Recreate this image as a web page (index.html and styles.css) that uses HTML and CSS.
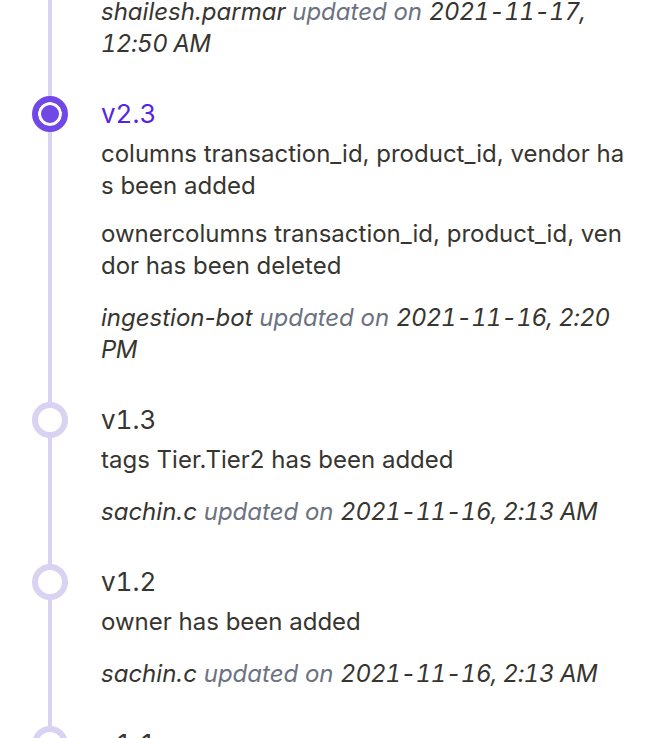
FILE: index.html
```html
<!DOCTYPE html>
<html lang="en">
<head>
    <meta charset="UTF-8">
    <meta name="viewport" content="width=device-width, initial-scale=1.0">
    <title>Version history</title>
    <link rel="stylesheet" href="styles.css">
</head>
<body>

<div class="timeline">
    <div class="item item-partial">
        <p class="meta"><span class="author">shailesh.parmar</span> <span class="muted">updated on</span> <span class="date">2021-11-17, 12:50 AM</span></p>
    </div>

    <div class="item active">
        <span class="dot"></span>
        <h3 class="version">v2.3</h3>
        <p class="change">columns transaction_id, product_id, vendor has been added</p>
        <p class="change">ownercolumns transaction_id, product_id, vendor has been deleted</p>
        <p class="meta"><span class="author">ingestion-bot</span> <span class="muted">updated on</span> <span class="date">2021-11-16, 2:20 PM</span></p>
    </div>

    <div class="item">
        <span class="dot"></span>
        <h3 class="version">v1.3</h3>
        <p class="change">tags Tier.Tier2 has been added</p>
        <p class="meta"><span class="author">sachin.c</span> <span class="muted">updated on</span> <span class="date">2021-11-16, 2:13 AM</span></p>
    </div>

    <div class="item">
        <span class="dot"></span>
        <h3 class="version">v1.2</h3>
        <p class="change">owner has been added</p>
        <p class="meta"><span class="author">sachin.c</span> <span class="muted">updated on</span> <span class="date">2021-11-16, 2:13 AM</span></p>
    </div>

    <div class="item">
        <span class="dot"></span>
        <h3 class="version">v1.1</h3>
    </div>
</div>

</body>
</html>
```

FILE: styles.css
```css
body {
    font-family: Inter, 'Noto Sans', sans-serif;
    margin: 0;
    padding: 0;
    background: #ffffff;
    color: #37352f;
    overflow: hidden;
    height: 738px;
}
.timeline {
    position: relative;
    margin-top: -4px;
    padding: 0 30px 0 101px;
}
.timeline::before {
    content: '';
    position: absolute;
    left: 48px;
    top: 0;
    bottom: 0;
    width: 4px;
    background: #d9d2f0;
}
.item {
    position: relative;
    padding-bottom: 38px;
}
.dot {
    position: absolute;
    left: -69px;
    top: -2px;
    width: 24px;
    height: 24px;
    border: 6px solid #d9d2f0;
    border-radius: 50%;
    background: #ffffff;
}
.item.active .dot {
    border-color: #7147e8;
    background: #7147e8;
    box-shadow: inset 0 0 0 3px #ffffff;
}
.version {
    margin: 0 0 8px;
    font-size: 26px;
    font-weight: 400;
    line-height: 32px;
    font-variant-numeric: tabular-nums;
}
.item.active .version {
    color: #5226e3;
}
.change {
    margin: 0 0 16px;
    font-size: 24px;
    line-height: 32px;
    word-break: break-all;
}
.meta {
    margin: 0;
    font-size: 24px;
    line-height: 32px;
    font-style: italic;
}
.change + .meta {
    margin-top: 20px;
}
.muted {
    color: #6b7280;
}
.date {
    font-variant-numeric: tabular-nums;
    letter-spacing: -0.5px;
}
```
